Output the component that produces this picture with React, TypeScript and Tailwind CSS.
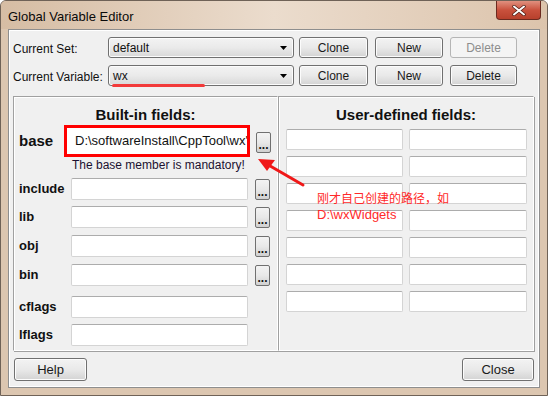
import React from 'react';

const FONT = { fontFamily: '"Liberation Sans", Arial, sans-serif' };

function WinButton({ label, disabled, className }: { label: string; disabled?: boolean; className?: string }) {
  return (
    <div
      className={`flex items-center justify-center rounded-[3px] border text-[12px] ${
        disabled
          ? 'border-[#b5b5b5] bg-[#f4f4f4] text-[#8d8d8d]'
          : 'border-[#707070] bg-linear-to-b from-[#f3f3f3] via-[#e9e9e9] to-[#d3d3d3] text-[#1a1a1a] shadow-[inset_0_0_0_1px_#fcfcfc]'
      } ${className ?? ''}`}
    >
      {label}
    </div>
  );
}

function Combo({ value }: { value: string }) {
  return (
    <div className="flex h-[21px] w-[186px] items-center justify-between rounded-[3px] border border-[#707070] bg-linear-to-b from-[#f3f3f3] via-[#eaeaea] to-[#d8d8d8] pl-[4px] pr-[6px] text-[12px] text-[#111] shadow-[inset_0_0_0_1px_#fcfcfc]">
      <span>{value}</span>
      <svg width="7" height="4" viewBox="0 0 7 4">
        <path d="M0 0h7L3.5 4z" fill="#000" />
      </svg>
    </div>
  );
}

function Field({ className }: { className?: string }) {
  return (
    <div
      className={`rounded-[2px] border border-[#d4d4d4] border-t-[#acacac] bg-white ${className ?? ''}`}
    />
  );
}

function Dots() {
  return (
    <div className="flex h-[21px] w-[15px] items-end justify-center rounded-[2px] border border-[#707070] bg-linear-to-b from-[#f3f3f3] via-[#e8e8e8] to-[#d0d0d0] pb-[4px] text-[12px] leading-[6px] font-bold text-[#111]">
      ...
    </div>
  );
}

const builtIn: { name: string; mt: string; dots: boolean }[] = [
  { name: 'include', mt: 'mt-[5px]', dots: true },
  { name: 'lib', mt: 'mt-[6px]', dots: true },
  { name: 'obj', mt: 'mt-[7px]', dots: true },
  { name: 'bin', mt: 'mt-[7px]', dots: true },
  { name: 'cflags', mt: 'mt-[10px]', dots: false },
  { name: 'lflags', mt: 'mt-[6px]', dots: false },
];

export default function App() {
  return (
    <div
      className="relative h-[396px] w-[548px] overflow-hidden rounded-t-[6px] border border-[#6f6257] bg-[#dcc6b0]"
      style={FONT}
    >
      {/* Title bar */}
      <div className="flex h-[28px] items-start justify-between bg-linear-to-r from-[#d6bda4] via-[#ebdccd] to-[#dcc4ac] pl-[7px] pr-[6px]">
        <span className="mt-[6px] text-[13px] text-[#0a0a0a]">Global Variable Editor</span>
        <div className="flex h-[19px] w-[45px] items-center justify-center rounded-b-[4px] border border-t-0 border-[#6b2a20] bg-linear-to-b from-[#e0907f] via-[#c9513d] to-[#b7402c]">
          <svg width="14" height="11" viewBox="0 0 14 11">
            <path d="M2 1.5l10 8M12 1.5l-10 8" stroke="#4a1b14" strokeWidth="3.4" strokeLinecap="round" />
            <path d="M2 1.5l10 8M12 1.5l-10 8" stroke="#fff" strokeWidth="2" strokeLinecap="round" />
          </svg>
        </div>
      </div>

      {/* Client area */}
      <div className="mx-[7px] flex h-[359px] flex-col border border-[#8e8e8e] bg-[#f0f0f0] shadow-[inset_0_0_0_1px_#fff]">
        <div className="mt-[7px] flex flex-col gap-[7px] pl-[4px]">
          <div className="flex h-[21px] items-center">
            <span className="w-[95px] pt-[2px] text-[12px] text-[#111]">Current Set:</span>
            <Combo value="default" />
            <WinButton label="Clone" className="ml-[5px] h-[21px] w-[69px]" />
            <WinButton label="New" className="ml-[7px] h-[21px] w-[68px]" />
            <WinButton label="Delete" disabled className="ml-[7px] h-[21px] w-[67px]" />
          </div>
          <div className="relative flex h-[21px] items-center">
            <span className="w-[95px] pt-[2px] text-[12px] text-[#111]">Current Variable:</span>
            <Combo value="wx" />
            <WinButton label="Clone" className="ml-[5px] h-[21px] w-[69px]" />
            <WinButton label="New" className="ml-[7px] h-[21px] w-[68px]" />
            <WinButton label="Delete" className="ml-[7px] h-[21px] w-[67px]" />
            <div className="absolute left-[99px] top-[19px] h-[3px] w-[93px] rounded-full bg-[#f23a3a]" />
          </div>
        </div>

        {/* Group boxes */}
        <div className="mt-[10px] flex pl-[4px]">
          <div className="flex h-[255px] w-[265px] flex-col border border-t-[#a0a0a0] border-l-[#a0a0a0] border-r-white border-b-white shadow-[inset_1px_1px_0_#fff,1px_1px_0_#a0a0a0]">
            <div className="mt-[8px] h-[20px] text-center text-[15px] leading-[20px] font-bold text-[#111]">
              Built-in fields:
            </div>
            <div className="flex h-[32px] items-center">
              <span className="w-[50px] pl-[5px] text-[15px] font-bold text-[#111]">base</span>
              <div className="flex h-[32px] w-[186px] items-center overflow-hidden whitespace-nowrap border-[3px] border-[#f00] bg-white pl-[8px] text-[13px] text-[#111]">
                D:\softwareInstall\CppTool\wx'
              </div>
              <div className="ml-[6px] pt-[2px]">
                <Dots />
              </div>
            </div>
            <div className="flex h-[16px] items-center pl-[58px] text-[12px] text-[#1b1030]">
              The base member is mandatory!
            </div>
            {builtIn.map((r) => (
              <div key={r.name} className={`flex h-[22px] items-center ${r.mt}`}>
                <span className="w-[57px] pl-[5px] text-[13px] font-bold text-[#111]">{r.name}</span>
                <Field className="h-[22px] w-[177px]" />
                {r.dots && (
                  <div className="ml-[7px]">
                    <Dots />
                  </div>
                )}
              </div>
            ))}
          </div>

          <div className="flex h-[255px] w-[256px] flex-col border border-t-[#a0a0a0] border-l-[#a0a0a0] border-r-white border-b-white shadow-[inset_1px_1px_0_#fff,1px_1px_0_#a0a0a0]">
            <div className="mt-[8px] h-[20px] text-center text-[15px] leading-[20px] font-bold text-[#111]">
              User-defined fields:
            </div>
            <div className="mt-[4px] grid grid-cols-[117px_118px] gap-x-[6px] gap-y-[6px] pl-[7px]">
              {Array.from({ length: 14 }).map((_, i) => (
                <Field key={i} className="h-[21px]" />
              ))}
            </div>
          </div>
        </div>

        <div className="mt-[7px] flex justify-between pl-[5px] pr-[5px]">
          <WinButton label="Help" className="h-[23px] w-[73px] text-[13px]" />
          <WinButton label="Close" className="h-[23px] w-[72px] text-[13px]" />
        </div>
      </div>

      {/* Annotation overlay */}
      <svg className="absolute left-[250px] top-[150px]" width="60" height="40" viewBox="0 0 60 40">
        <path d="M52 34L14 12" stroke="#f01818" strokeWidth="3" strokeLinecap="round" />
        <path d="M7 8l17 1-8 11z" fill="#f01818" />
      </svg>
      <div className="absolute left-[316px] top-[189px] text-[#ff2a2a]">
        <div
          className="text-[12px] leading-[16px]"
          style={{ fontFamily: '"Noto Sans CJK SC", "Liberation Sans", sans-serif' }}
        >
          刚才自己创建的路径，如
        </div>
        <div className="text-[13px] leading-[18px]">D:\wxWidgets</div>
      </div>
    </div>
  );
}
